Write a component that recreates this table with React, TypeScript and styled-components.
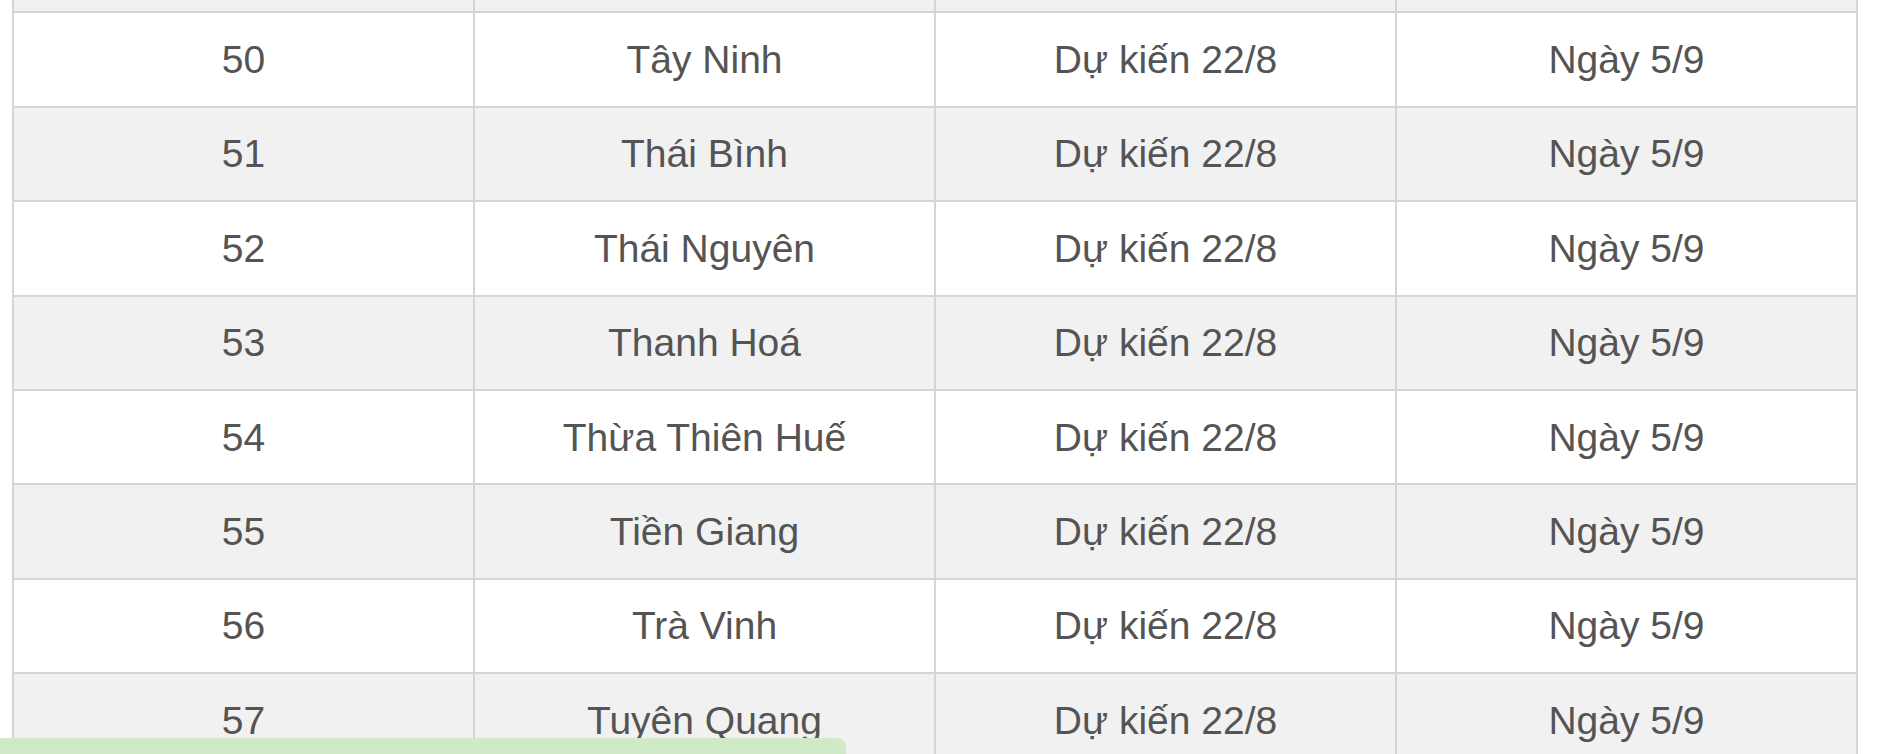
import React from 'react'
import styled, { createGlobalStyle } from 'styled-components'

const GlobalStyle = createGlobalStyle`
  html, body {
    margin: 0;
    padding: 0;
    background: #ffffff;
    overflow: hidden;
  }
  body {
    font-family: "Liberation Sans", Arial, sans-serif;
  }
`

const Page = styled.div`
  width: 1883px;
  height: 754px;
  overflow: hidden;
  position: relative;
  background: #fff;
`

const TableWrap = styled.div`
  margin-top: -83px;
  padding-left: 12px;
  width: 1846px;
`

const Table = styled.table`
  width: 100%;
  border-collapse: collapse;
  table-layout: fixed;
`

const Row = styled.tr<{ $shaded: boolean }>`
  background: ${(p) => (p.$shaded ? '#f1f1f1' : '#ffffff')};
`

const Cell = styled.td`
  height: 92.4px;
  padding: 0;
  border: 2px solid #d5d5d5;
  text-align: center;
  vertical-align: middle;
  font-size: 39px;
  color: #545454;
  line-height: 1;
`

const BottomBar = styled.div`
  position: absolute;
  left: 0;
  top: 738px;
  width: 846px;
  height: 40px;
  background: #d0e9c6;
  border-top-right-radius: 9px;
`

// row 49 is only visible as a sliver at the top, no text shows
const provinces: [number, string, boolean][] = [
  [49, '', false],
  [50, 'Tây Ninh', true],
  [51, 'Thái Bình', true],
  [52, 'Thái Nguyên', true],
  [53, 'Thanh Hoá', true],
  [54, 'Thừa Thiên Huế', true],
  [55, 'Tiền Giang', true],
  [56, 'Trà Vinh', true],
  [57, 'Tuyên Quang', true],
]

export default function App() {
  return (
    <>
      <GlobalStyle />
      <Page>
        <TableWrap>
          <Table>
            <colgroup>
              <col style={{ width: '25%' }} />
              <col style={{ width: '25%' }} />
              <col style={{ width: '25%' }} />
              <col style={{ width: '25%' }} />
            </colgroup>
            <tbody>
              {provinces.map(([no, name, show]) => (
                <Row key={no} $shaded={no % 2 === 1}>
                  <Cell>{show ? no : ''}</Cell>
                  <Cell>{name}</Cell>
                  <Cell>{show ? 'Dự kiến 22/8' : ''}</Cell>
                  <Cell>{show ? 'Ngày 5/9' : ''}</Cell>
                </Row>
              ))}
            </tbody>
          </Table>
        </TableWrap>
        <BottomBar />
      </Page>
    </>
  )
}
